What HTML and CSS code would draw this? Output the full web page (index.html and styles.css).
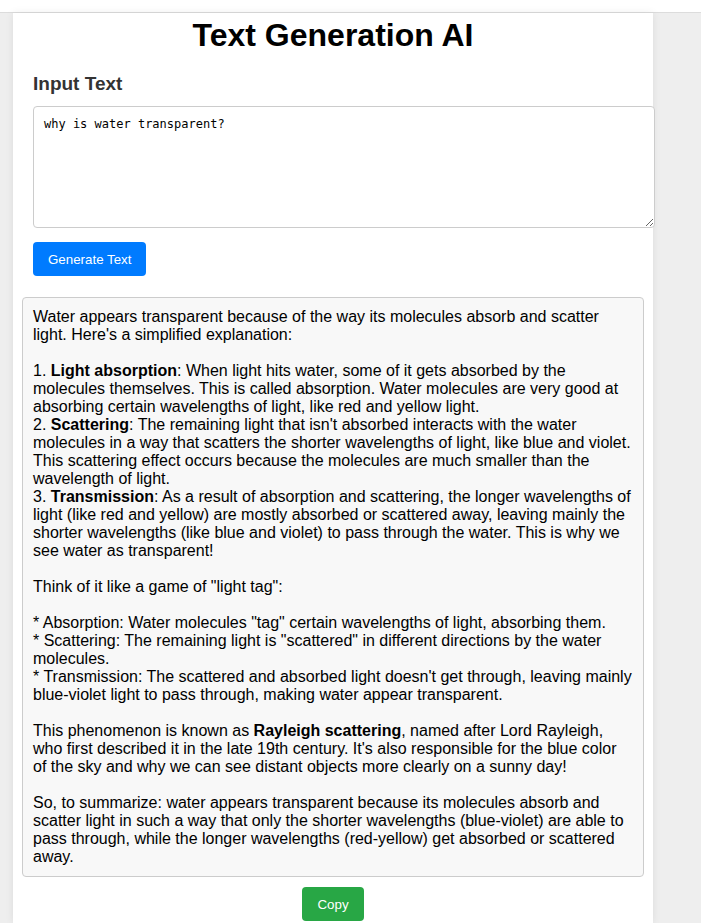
FILE: index.html
```html
<!DOCTYPE html>
<html>
<head>
<meta charset="utf-8">
<link rel="stylesheet" href="styles.css">
</head>
<body>
<div class="topbar"></div>
<div class="container">
  <h1 class="title">Text Generation AI</h1>
  <label class="label">Input Text</label>
  <textarea class="input">why is water transparent?</textarea>
  <button class="btn btn-generate">Generate Text</button>
  <div class="result">Water appears transparent because of the way its molecules absorb and scatter light. Here's a simplified explanation:

1. <b>Light absorption</b>: When light hits water, some of it gets absorbed by the molecules themselves. This is called absorption. Water molecules are very good at absorbing certain wavelengths of light, like red and yellow light.
2. <b>Scattering</b>: The remaining light that isn't absorbed interacts with the water molecules in a way that scatters the shorter wavelengths of light, like blue and violet. This scattering effect occurs because the molecules are much smaller than the wavelength of light.
3. <b>Transmission</b>: As a result of absorption and scattering, the longer wavelengths of light (like red and yellow) are mostly absorbed or scattered away, leaving mainly the shorter wavelengths (like blue and violet) to pass through the water. This is why we see water as transparent!

Think of it like a game of "light tag":

* Absorption: Water molecules "tag" certain wavelengths of light, absorbing them.
* Scattering: The remaining light is "scattered" in different directions by the water molecules.
* Transmission: The scattered and absorbed light doesn't get through, leaving mainly blue-violet light to pass through, making water appear transparent.

This phenomenon is known as <b>Rayleigh scattering</b>, named after Lord Rayleigh, who first described it in the late 19th century. It's also responsible for the blue color of the sky and why we can see distant objects more clearly on a sunny day!

So, to summarize: water appears transparent because its molecules absorb and scatter light in such a way that only the shorter wavelengths (blue-violet) are able to pass through, while the longer wavelengths (red-yellow) get absorbed or scattered away.</div>
  <div class="actions">
    <button class="btn btn-copy">Copy</button>
  </div>
</div>
</body>
</html>
```
FILE: styles.css
```css
html, body {
  margin: 0;
  padding: 0;
}
body {
  background: #eeeeee;
  font-family: "Liberation Sans", Arial, sans-serif;
  font-size: 16px;
  color: #000;
  overflow: hidden;
  height: 923px;
}
.topbar {
  height: 13px;
  background: #fff;
  border-bottom: 1px solid #dcdcdc;
  box-sizing: border-box;
}
.container {
  width: 640px;
  margin-left: 13px;
  background: #fff;
  box-shadow: 0 0 8px rgba(0, 0, 0, 0.08);
  padding: 0 20px;
  box-sizing: border-box;
  display: flex;
  flex-direction: column;
  height: 910px;
}
.title {
  margin: 4px 0 0;
  font-size: 32px;
  font-weight: bold;
  text-align: center;
  line-height: 37px;
}
.label {
  margin-top: 19px;
  font-size: 19px;
  font-weight: bold;
  color: #333;
  line-height: 22px;
}
.input {
  margin-top: 11px;
  width: 600px;
  height: 100px;
  padding: 10px;
  border: 1px solid #ccc;
  border-radius: 4px;
  font-family: "DejaVu Sans Mono", monospace;
  font-size: 12px;
  color: #000;
  resize: vertical;
  flex-shrink: 0;
}
.btn {
  border: none;
  border-radius: 4px;
  color: #fff;
  font-family: "Liberation Sans", Arial, sans-serif;
  font-size: 13.33px;
  padding: 10px 15px;
  height: 34px;
  cursor: pointer;
}
.btn-generate {
  margin-top: 14px;
  background: #007bff;
  align-self: flex-start;
}
.result {
  margin: 21px -11px 0;
  padding: 10px;
  background: #f8f8f8;
  border: 1px solid #ccc;
  border-radius: 4px;
  white-space: pre-wrap;
  line-height: 18px;
}
.actions {
  display: flex;
  justify-content: center;
  margin-top: 10px;
}
.btn-copy {
  background: #28a745;
}
```
